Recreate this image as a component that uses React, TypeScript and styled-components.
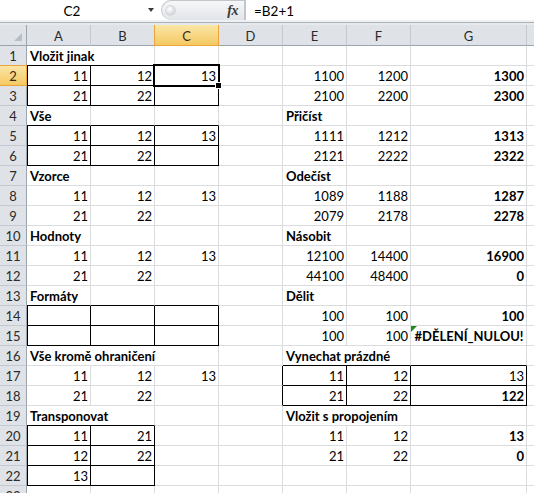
import React from 'react';
import styled, { createGlobalStyle, css } from 'styled-components';

const GlobalStyle = createGlobalStyle`
  html, body { margin: 0; padding: 0; background: #ffffff; overflow: hidden; }
  * { box-sizing: border-box; }
`;

const FONT = `Lato, "Liberation Sans", sans-serif`;
const GRID = '#dadcdd';
const HEAD_BG = '#dfe3e8';
const HEAD_LINE = '#c3c9d0';
const HEAD_EDGE = '#9aa4af';

const Window = styled.div`
  width: 534px;
  height: 493px;
  overflow: hidden;
  background: #fff;
  font-family: ${FONT};
  font-size: 13px;
  color: #000;
`;

const FormulaBar = styled.div`
  display: flex;
  height: 20px;
  background: #fff;
`;

const NameBox = styled.div`
  width: 161px;
  display: flex;
  align-items: center;
`;

const NameText = styled.div`
  width: 144px;
  text-align: center;
  font-size: 13.5px;
  padding-top: 1px;
`;

const DropArrow = styled.div`
  width: 0;
  height: 0;
  border-left: 3.5px solid transparent;
  border-right: 3.5px solid transparent;
  border-top: 4px solid #3c3c3c;
  margin-left: 4px;
`;

const FxPill = styled.div`
  width: 84px;
  height: 20px;
  border: 1px solid #c2c7ce;
  border-bottom: none;
  border-radius: 11px 0 0 11px;
  background: linear-gradient(#f6f7f8, #e2e5e9);
  display: flex;
  align-items: center;
  justify-content: space-between;
  padding: 0 6px 0 3px;
`;

const Dimple = styled.div`
  width: 11px;
  height: 11px;
  border-radius: 50%;
  background: radial-gradient(circle at 40% 35%, #ffffff, #d3d7dc 70%);
  border: 1px solid #d4d8dd;
`;

const Fx = styled.span`
  font-family: "Liberation Serif", serif;
  font-style: italic;
  font-weight: bold;
  font-size: 14px;
  color: #3a3a3a;
  letter-spacing: -0.5px;
`;

const FormulaInput = styled.div`
  flex: 1;
  display: flex;
  align-items: center;
  padding-left: 8px;
  padding-top: 1px;
  font-size: 13.5px;
  border-left: 1px solid #c2c7ce;
`;

const Splitter = styled.div`
  height: 5px;
  background: linear-gradient(#eef0f2 0 2px, #a9b0b8 2px 3px, #e6e9ed 3px);
`;

const Sheet = styled.div`
  position: relative;
  display: grid;
  grid-template-columns: 27px repeat(6, 64px) 116px 64px;
  grid-template-rows: 21px;
  grid-auto-rows: 20px;
`;

const Corner = styled.div`
  background: ${HEAD_BG};
  border-right: 1px solid ${HEAD_EDGE};
  border-bottom: 1px solid ${HEAD_EDGE};
  position: relative;
  &::after {
    content: '';
    position: absolute;
    right: 4px;
    bottom: 4px;
    width: 0;
    height: 0;
    border-left: 8px solid transparent;
    border-bottom: 8px solid #b7bec7;
  }
`;

const ColHead = styled.div<{ $active?: boolean }>`
  background: ${HEAD_BG};
  border-right: 1px solid ${HEAD_LINE};
  border-bottom: 1px solid ${HEAD_EDGE};
  display: flex;
  align-items: center;
  justify-content: center;
  color: #2a2a2a;
  padding-top: 1px;
  ${(p) =>
    p.$active &&
    css`
      background: linear-gradient(#fae6a6, #f5c962);
      border-right-color: #eba33c;
      border-bottom-color: #eba33c;
      box-shadow: -1px 0 0 #eba33c;
      color: #3b2a14;
    `}
`;

const RowHead = styled.div<{ $active?: boolean }>`
  background: ${HEAD_BG};
  border-right: 1px solid ${HEAD_EDGE};
  border-bottom: 1px solid ${HEAD_LINE};
  display: flex;
  align-items: center;
  justify-content: center;
  color: #2a2a2a;
  padding-top: 1px;
  ${(p) =>
    p.$active &&
    css`
      background: linear-gradient(#fae6a6, #f5c962);
      border-right-color: #eba33c;
      border-bottom-color: #eba33c;
      box-shadow: 0 -1px 0 #eba33c;
      color: #3b2a14;
    `}
`;

const Cell = styled.div<{
  $span: number;
  $bold?: boolean;
  $align: 'l' | 'r' | 'c';
  $rb?: boolean;
  $bb?: boolean;
  $lb?: boolean;
  $tri?: boolean;
}>`
  position: relative;
  grid-column: span ${(p) => p.$span};
  border-right: 1px solid ${(p) => (p.$rb ? '#000' : GRID)};
  border-bottom: 1px solid ${(p) => (p.$bb ? '#000' : GRID)};
  ${(p) => p.$lb && css`box-shadow: inset 1px 0 0 #000;`}
  display: flex;
  align-items: flex-end;
  justify-content: ${(p) => (p.$align === 'r' ? 'flex-end' : p.$align === 'c' ? 'center' : 'flex-start')};
  padding: 0 2px 1px 3px;
  font-weight: ${(p) => (p.$bold ? 700 : 400)};
  white-space: nowrap;
  line-height: 16px;
  ${(p) =>
    p.$tri &&
    css`
      &::before {
        content: '';
        position: absolute;
        left: 0;
        top: 0;
        width: 0;
        height: 0;
        border-top: 6px solid #1f8a1f;
        border-right: 6px solid transparent;
      }
    `}
`;

const Selection = styled.div`
  position: absolute;
  left: 153px;
  top: 39px;
  width: 67px;
  height: 23px;
  border: 2px solid #000;
  box-shadow: inset 0 0 0 1px #fff;
  pointer-events: none;
`;

const FillHandle = styled.div`
  position: absolute;
  left: 215px;
  top: 57px;
  width: 7px;
  height: 7px;
  background: #000;
  border: 1px solid #fff;
`;

type Spec = { v?: string; b?: boolean; a?: 'l' | 'r' | 'c'; span?: number; tri?: boolean } | null;

const L = (v: string, span = 1): Spec => ({ v, b: true, a: 'l', span });
const N = (v: string | number): Spec => ({ v: String(v), a: 'r' });
const B = (v: string | number): Spec => ({ v: String(v), b: true, a: 'r' });
const E: Spec = {};

const rows: Spec[][] = [
  [L('Vložit jinak', 2), null, E, E, E, E, E],
  [N(11), N(12), N(13), E, N(1100), N(1200), B(1300)],
  [N(21), N(22), E, E, N(2100), N(2200), B(2300)],
  [L('Vše'), E, E, E, L('Přičíst'), E, E],
  [N(11), N(12), N(13), E, N(1111), N(1212), B(1313)],
  [N(21), N(22), E, E, N(2121), N(2222), B(2322)],
  [L('Vzorce'), E, E, E, L('Odečíst'), E, E],
  [N(11), N(12), N(13), E, N(1089), N(1188), B(1287)],
  [N(21), N(22), E, E, N(2079), N(2178), B(2278)],
  [L('Hodnoty'), E, E, E, L('Násobit'), E, E],
  [N(11), N(12), N(13), E, N(12100), N(14400), B(16900)],
  [N(21), N(22), E, E, N(44100), N(48400), B(0)],
  [L('Formáty'), E, E, E, L('Dělit'), E, E],
  [E, E, E, E, N(100), N(100), B(100)],
  [E, E, E, E, N(100), N(100), { v: '#DĚLENÍ_NULOU!', b: true, a: 'c', tri: true }],
  [L('Vše kromě ohraničení', 3), null, null, E, L('Vynechat prázdné', 2), null, E],
  [N(11), N(12), N(13), E, N(11), N(12), N(13)],
  [N(21), N(22), E, E, N(21), N(22), B(122)],
  [L('Transponovat', 2), null, E, E, L('Vložit s propojením', 2), null, E],
  [N(11), N(21), E, E, N(11), N(12), B(13)],
  [N(12), N(22), E, E, N(21), N(22), B(0)],
  [N(13), E, E, E, E, E, E],
  [E, E, E, E, E, E, E],
];

const ranges = [
  { r1: 2, r2: 3, c1: 0, c2: 2 },
  { r1: 5, r2: 6, c1: 0, c2: 2 },
  { r1: 14, r2: 15, c1: 0, c2: 2 },
  { r1: 17, r2: 18, c1: 4, c2: 6 },
  { r1: 20, r2: 22, c1: 0, c2: 1 },
];

const inRange = (r: number, c: number) =>
  ranges.some((g) => r >= g.r1 && r <= g.r2 && c >= g.c1 && c <= g.c2);

// Column H is only a sliver at the right edge; its letter lies outside the window.
const cols = ['A', 'B', 'C', 'D', 'E', 'F', 'G', ''];

export default function App() {
  return (
    <Window>
      <GlobalStyle />
      <FormulaBar>
        <NameBox>
          <NameText>C2</NameText>
          <DropArrow />
        </NameBox>
        <FxPill>
          <Dimple />
          <Fx>fx</Fx>
        </FxPill>
        <FormulaInput>=B2+1</FormulaInput>
      </FormulaBar>
      <Splitter />
      <Sheet>
        <Corner />
        {cols.map((c, i) => (
          <ColHead key={`c${i}`} $active={c === 'C'}>
            {c}
          </ColHead>
        ))}
        {rows.map((row, ri) => {
          const r = ri + 1;
          const out: React.ReactNode[] = [
            <RowHead key={`h${r}`} $active={r === 2}>
              {r}
            </RowHead>,
          ];
          row.forEach((spec, c) => {
            if (spec === null) return;
            const span = spec.span ?? 1;
            const last = c + span - 1;
            let bb = false;
            for (let k = c; k <= last; k++) if (inRange(r, k) || inRange(r + 1, k)) bb = true;
            const rb = inRange(r, last) || inRange(r, last + 1);
            const lb = c === 0 && inRange(r, 0);
            out.push(
              <Cell
                key={`${r}-${c}`}
                $span={span}
                $bold={spec.b}
                $align={spec.a ?? 'r'}
                $rb={rb}
                $bb={bb}
                $lb={lb}
                $tri={spec.tri}
              >
                {spec.v}
              </Cell>
            );
          });
          out.push(<Cell key={`${r}-h`} $span={1} $align="l" />);
          return out;
        })}
        <Selection />
        <FillHandle />
      </Sheet>
    </Window>
  );
}
